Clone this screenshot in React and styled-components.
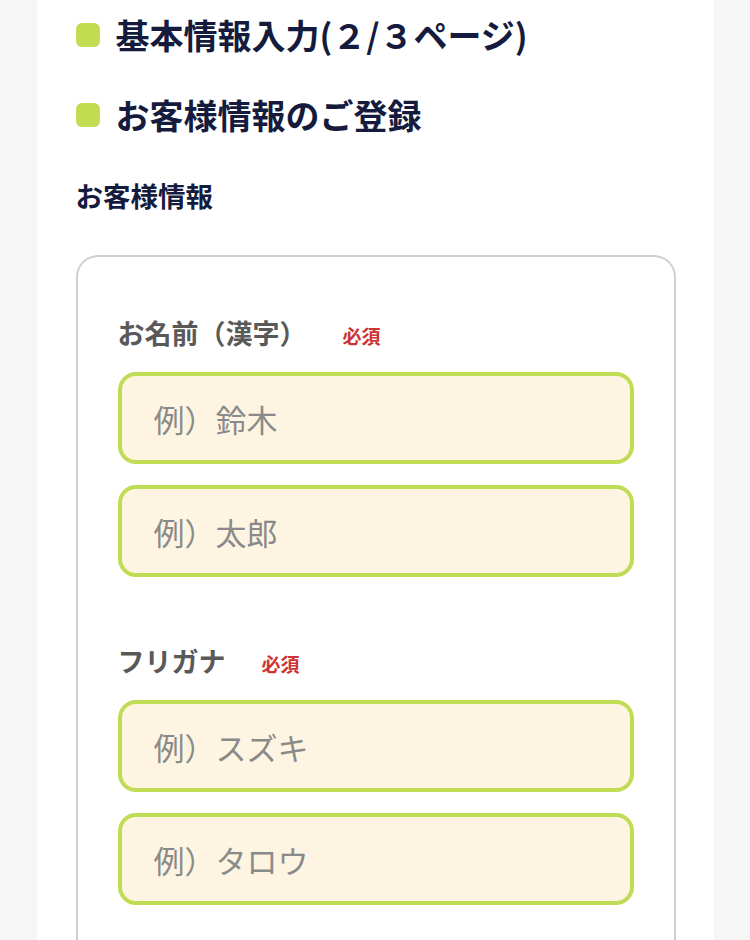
import styled, { createGlobalStyle } from "styled-components";

const GlobalStyle = createGlobalStyle`
  html, body {
    margin: 0;
    padding: 0;
    background: #f6f6f6;
    font-family: "Noto Sans CJK JP", "Noto Sans", sans-serif;
  }
`;

const fields = [
  { label: "お名前（漢字）", placeholders: ["例）鈴木", "例）太郎"] },
  { label: "フリガナ", placeholders: ["例）スズキ", "例）タロウ"] },
];

const App = () => {
  return (
    <>
      <GlobalStyle />
      <Page>
        <Heading>基本情報入力(２/３ページ)</Heading>
        <Heading>お客様情報のご登録</Heading>
        <SubHeading>お客様情報</SubHeading>

        <Card>
          {fields.map((f) => (
            <Field key={f.label}>
              <LabelRow>
                <Label>{f.label}</Label>
                <Required>必須</Required>
              </LabelRow>
              {f.placeholders.map((p) => (
                <Input key={p} placeholder={p} />
              ))}
            </Field>
          ))}
        </Card>
      </Page>
    </>
  );
};

export default App;

const Page = styled.div`
  width: 677px;
  min-height: 940px;
  margin: 0 auto;
  background: #fff;
  padding: 12px 38px 0 39px;
  box-sizing: border-box;
`;

const Heading = styled.h2`
  display: flex;
  align-items: center;
  gap: 16px;
  margin: 0 0 34px;
  font-size: 34px;
  line-height: 46px;
  font-weight: 700;
  color: #151b3d;

  &::before {
    content: "";
    width: 24px;
    height: 24px;
    border-radius: 6px;
    background: #c3dd52;
    flex-shrink: 0;
  }
`;

const SubHeading = styled.h3`
  margin: 39px 0 42px;
  font-size: 27.5px;
  line-height: 36px;
  font-weight: 700;
  color: #151b3d;
`;

const Card = styled.div`
  border: 2px solid #cfcfcf;
  border-bottom: none;
  border-radius: 22px 22px 0 0;
  padding: 58px 40px 40px;
  display: flex;
  flex-direction: column;
  gap: 66px;
`;

const Field = styled.div`
  display: flex;
  flex-direction: column;
  gap: 21px;
`;

const LabelRow = styled.div`
  display: flex;
  align-items: center;
  gap: 36px;
`;

const Label = styled.span`
  font-size: 27px;
  line-height: 36px;
  font-weight: 700;
  color: #595959;
`;

const Required = styled.span`
  font-size: 19px;
  font-weight: 700;
  color: #cc3333;
  margin-top: 4px;
`;

const Input = styled.input`
  box-sizing: border-box;
  width: 516px;
  height: 92px;
  border: 4px solid #c0dc55;
  border-radius: 18px;
  background: #fdf5e2;
  padding: 0 32px;
  font-family: inherit;
  font-size: 31px;
  font-weight: 400;
  color: #333;
  outline: none;

  &::placeholder {
    color: #8a8a8a;
  }
`;
